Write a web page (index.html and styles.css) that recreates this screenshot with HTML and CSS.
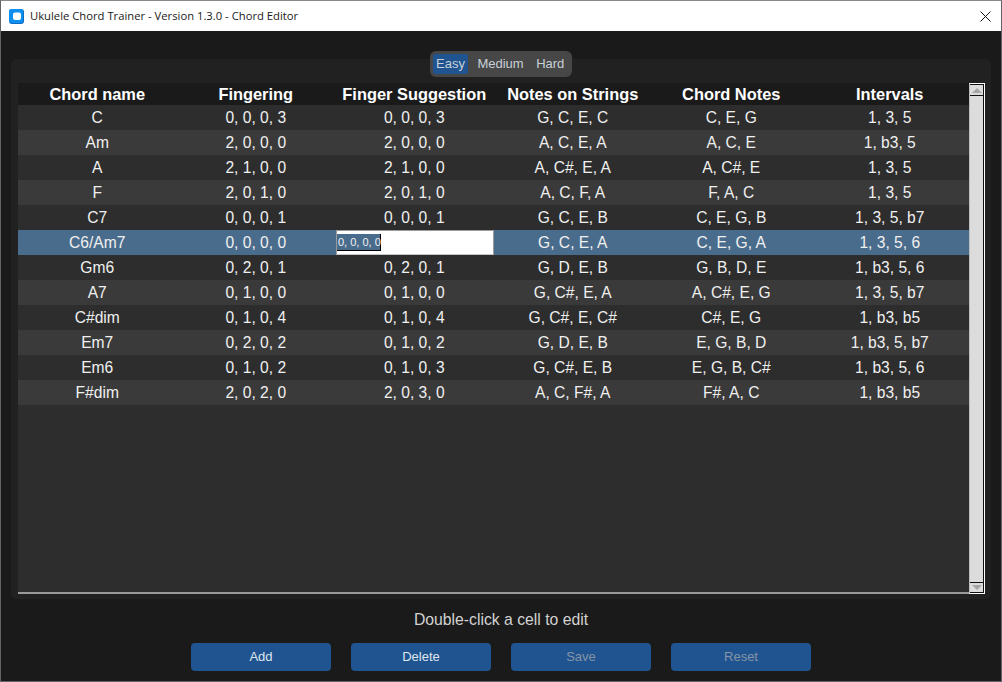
FILE: index.html
```html
<!DOCTYPE html>
<html lang="en">
<head>
    <meta charset="UTF-8">
    <title>Ukulele Chord Trainer - Version 1.3.0 - Chord Editor</title>
    <link rel="stylesheet" href="styles.css">
</head>
<body>
    <div class="window">
        <div class="titlebar">
            <svg class="app-icon" width="15" height="15" viewBox="0 0 15 15">
                <rect width="15" height="15" rx="3" fill="#0a6cc4"/>
                <rect width="14" height="14" rx="3" fill="#0f8ff0"/>
                <rect x="4" y="3.5" width="8" height="7.5" rx="2" fill="#fff"/>
            </svg>
            <span class="title">Ukulele Chord Trainer - Version 1.3.0 - Chord Editor</span>
            <svg class="close" width="11" height="11" viewBox="0 0 11 11">
                <path d="M.5.5l10 10M10.5.5l-10 10" stroke="#111" stroke-width="1" fill="none"/>
            </svg>
        </div>

        <div class="content">
            <div class="panel">
                <div class="tabs">
                    <span class="tab active">Easy</span>
                    <span class="tab">Medium</span>
                    <span class="tab">Hard</span>
                </div>
                <div class="table-wrap">
                    <table class="chords">
                        <thead>
                            <tr>
                                <th>Chord name</th>
                                <th>Fingering</th>
                                <th>Finger Suggestion</th>
                                <th>Notes on Strings</th>
                                <th>Chord Notes</th>
                                <th>Intervals</th>
                            </tr>
                        </thead>
                        <tbody>
                            <tr><td>C</td><td>0, 0, 0, 3</td><td>0, 0, 0, 3</td><td>G, C, E, C</td><td>C, E, G</td><td>1, 3, 5</td></tr>
                            <tr><td>Am</td><td>2, 0, 0, 0</td><td>2, 0, 0, 0</td><td>A, C, E, A</td><td>A, C, E</td><td>1, b3, 5</td></tr>
                            <tr><td>A</td><td>2, 1, 0, 0</td><td>2, 1, 0, 0</td><td>A, C#, E, A</td><td>A, C#, E</td><td>1, 3, 5</td></tr>
                            <tr><td>F</td><td>2, 0, 1, 0</td><td>2, 0, 1, 0</td><td>A, C, F, A</td><td>F, A, C</td><td>1, 3, 5</td></tr>
                            <tr><td>C7</td><td>0, 0, 0, 1</td><td>0, 0, 0, 1</td><td>G, C, E, B</td><td>C, E, G, B</td><td>1, 3, 5, b7</td></tr>
                            <tr class="selected">
                                <td>C6/Am7</td><td>0, 0, 0, 0</td>
                                <td class="editing"><div class="editor"><span class="editor-sel">0, 0, 0, 0</span></div></td>
                                <td>G, C, E, A</td><td>C, E, G, A</td><td>1, 3, 5, 6</td>
                            </tr>
                            <tr><td>Gm6</td><td>0, 2, 0, 1</td><td>0, 2, 0, 1</td><td>G, D, E, B</td><td>G, B, D, E</td><td>1, b3, 5, 6</td></tr>
                            <tr><td>A7</td><td>0, 1, 0, 0</td><td>0, 1, 0, 0</td><td>G, C#, E, A</td><td>A, C#, E, G</td><td>1, 3, 5, b7</td></tr>
                            <tr><td>C#dim</td><td>0, 1, 0, 4</td><td>0, 1, 0, 4</td><td>G, C#, E, C#</td><td>C#, E, G</td><td>1, b3, b5</td></tr>
                            <tr><td>Em7</td><td>0, 2, 0, 2</td><td>0, 1, 0, 2</td><td>G, D, E, B</td><td>E, G, B, D</td><td>1, b3, 5, b7</td></tr>
                            <tr><td>Em6</td><td>0, 1, 0, 2</td><td>0, 1, 0, 3</td><td>G, C#, E, B</td><td>E, G, B, C#</td><td>1, b3, 5, 6</td></tr>
                            <tr><td>F#dim</td><td>2, 0, 2, 0</td><td>2, 0, 3, 0</td><td>A, C, F#, A</td><td>F#, A, C</td><td>1, b3, b5</td></tr>
                        </tbody>
                    </table>
                    <div class="scrollbar">
                        <div class="scroll-btn"><span class="arrow-up"></span></div>
                        <div class="scroll-track"></div>
                        <div class="scroll-btn"><span class="arrow-down"></span></div>
                    </div>
                </div>
            </div>

            <p class="hint">Double-click a cell to edit</p>

            <div class="actions">
                <button>Add</button>
                <button>Delete</button>
                <button class="disabled">Save</button>
                <button class="disabled">Reset</button>
            </div>
        </div>
    </div>
</body>
</html>
```

FILE: styles.css
```css
* {
    box-sizing: border-box;
}
html, body {
    margin: 0;
    height: 100%;
}
body {
    font-family: "Liberation Sans", Arial, sans-serif;
    background: #1a1a1a;
    overflow: hidden;
}
.window {
    width: 1002px;
    height: 682px;
    display: flex;
    flex-direction: column;
    border: 1px solid #5f6468;
    border-top-color: #8a8a8a;
}
.titlebar {
    height: 30px;
    flex: none;
    background: white;
    display: flex;
    align-items: center;
    padding: 0 10px 0 8px;
}
.app-icon {
    flex: none;
}
.title {
    margin: 0 0 2px 6px;
    font-family: "Open Sans", sans-serif;
    font-size: 11.25px;
    color: #1a1a1a;
}
.close {
    margin-left: auto;
}
.content {
    flex: 1;
    display: flex;
    flex-direction: column;
    align-items: center;
    background: #1a1a1a;
    padding: 20px 10px 0;
}
.panel {
    width: 100%;
    height: 540px;
    margin-top: 8px;
    padding: 24px 0 5px 7px;
    background: #212121;
    border-radius: 6px;
    position: relative;
}
.tabs {
    position: absolute;
    top: -8px;
    left: 419px;
    width: 142px;
    height: 26px;
    padding: 3px;
    display: flex;
    gap: 6.5px;
    background: #474747;
    border-radius: 6px;
}
.tab {
    padding: 0 3px;
    font-size: 13px;
    line-height: 20px;
    color: #c8d0d8;
}
.tab.active {
    background: #1f5490;
    border-radius: 2px;
}
.table-wrap {
    display: flex;
    height: 511px;
}
.chords {
    width: 951px;
    height: 511px;
    flex: none;
    display: block;
    border-collapse: collapse;
    background: #2d2d2d;
    border-bottom: 2px solid #9a9a9a;
    color: #f0f0f0;
}
.chords thead, .chords tbody {
    display: block;
}
.chords tr {
    display: grid;
    grid-template-columns: repeat(6, 158.5px);
    height: 25px;
    background: #2d2d2d;
}
.chords tbody tr:nth-child(even) {
    background: #3a3a3a;
}
.chords thead tr {
    height: 22px;
    background: #1a1a1a;
}
.chords th {
    padding: 0;
    font-size: 16.4px;
    line-height: 23px;
    font-weight: bold;
    color: white;
    text-align: center;
}
.chords td {
    padding: 0;
    font-size: 15.6px;
    line-height: 25px;
    text-align: center;
}
.chords tbody tr.selected {
    background: #4a6c8c;
}
.chords td.editing {
    padding: 0;
    margin-left: 1px;
}
.editor {
    width: 158px;
    height: 25px;
    background: white;
    border: 1px solid #9a9a9a;
    border-bottom-color: #c4c4c4;
    text-align: left;
    padding: 3px 0 0 0;
    display: flex;
}
.editor-sel {
    height: 17px;
    width: 44px;
    background: #4a6c8c;
    color: #f0f0f0;
    border-right: 1px solid black;
    border-bottom: 1px solid black;
    font-size: 11px;
    line-height: 16px;
    padding-left: 1px;
    white-space: nowrap;
}
.scrollbar {
    width: 16px;
    height: 511px;
    background: #dcdcdc;
    border: 1px solid white;
    border-left-color: #bdbdbd;
    display: flex;
    flex-direction: column;
}
.scroll-btn {
    height: 11px;
    flex: none;
    display: flex;
    align-items: center;
    justify-content: center;
    background: #dcdcdc;
    border-top: 1px solid #111;
    border-right: 1px solid #111;
}
.scroll-btn:last-child {
    height: 10px;
    border-top: none;
    border-bottom: 1px solid #111;
}
.scroll-track {
    flex: 1;
    border-top: 1px solid #111;
    border-right: 1px solid #111;
    border-bottom: 1px solid #111;
    background: #dcdcdc;
}
.arrow-up {
    border-left: 5px solid transparent;
    border-right: 5px solid transparent;
    border-bottom: 5px solid #a6a6a6;
}
.arrow-down {
    border-left: 5px solid transparent;
    border-right: 5px solid transparent;
    border-top: 5px solid #a6a6a6;
}
.hint {
    margin: 11px 0 0;
    font-size: 15.75px;
    line-height: 20px;
    color: #d2d2d2;
}
.actions {
    display: flex;
    gap: 20px;
    margin-top: 13px;
}
button {
    width: 140px;
    height: 28px;
    padding: 0 0 2px;
    background: #1f5490;
    color: #dfe6ee;
    border: none;
    border-radius: 4px;
    font-family: "Liberation Sans", Arial, sans-serif;
    font-size: 13px;
}
button.disabled {
    color: #8593a5;
}
```
